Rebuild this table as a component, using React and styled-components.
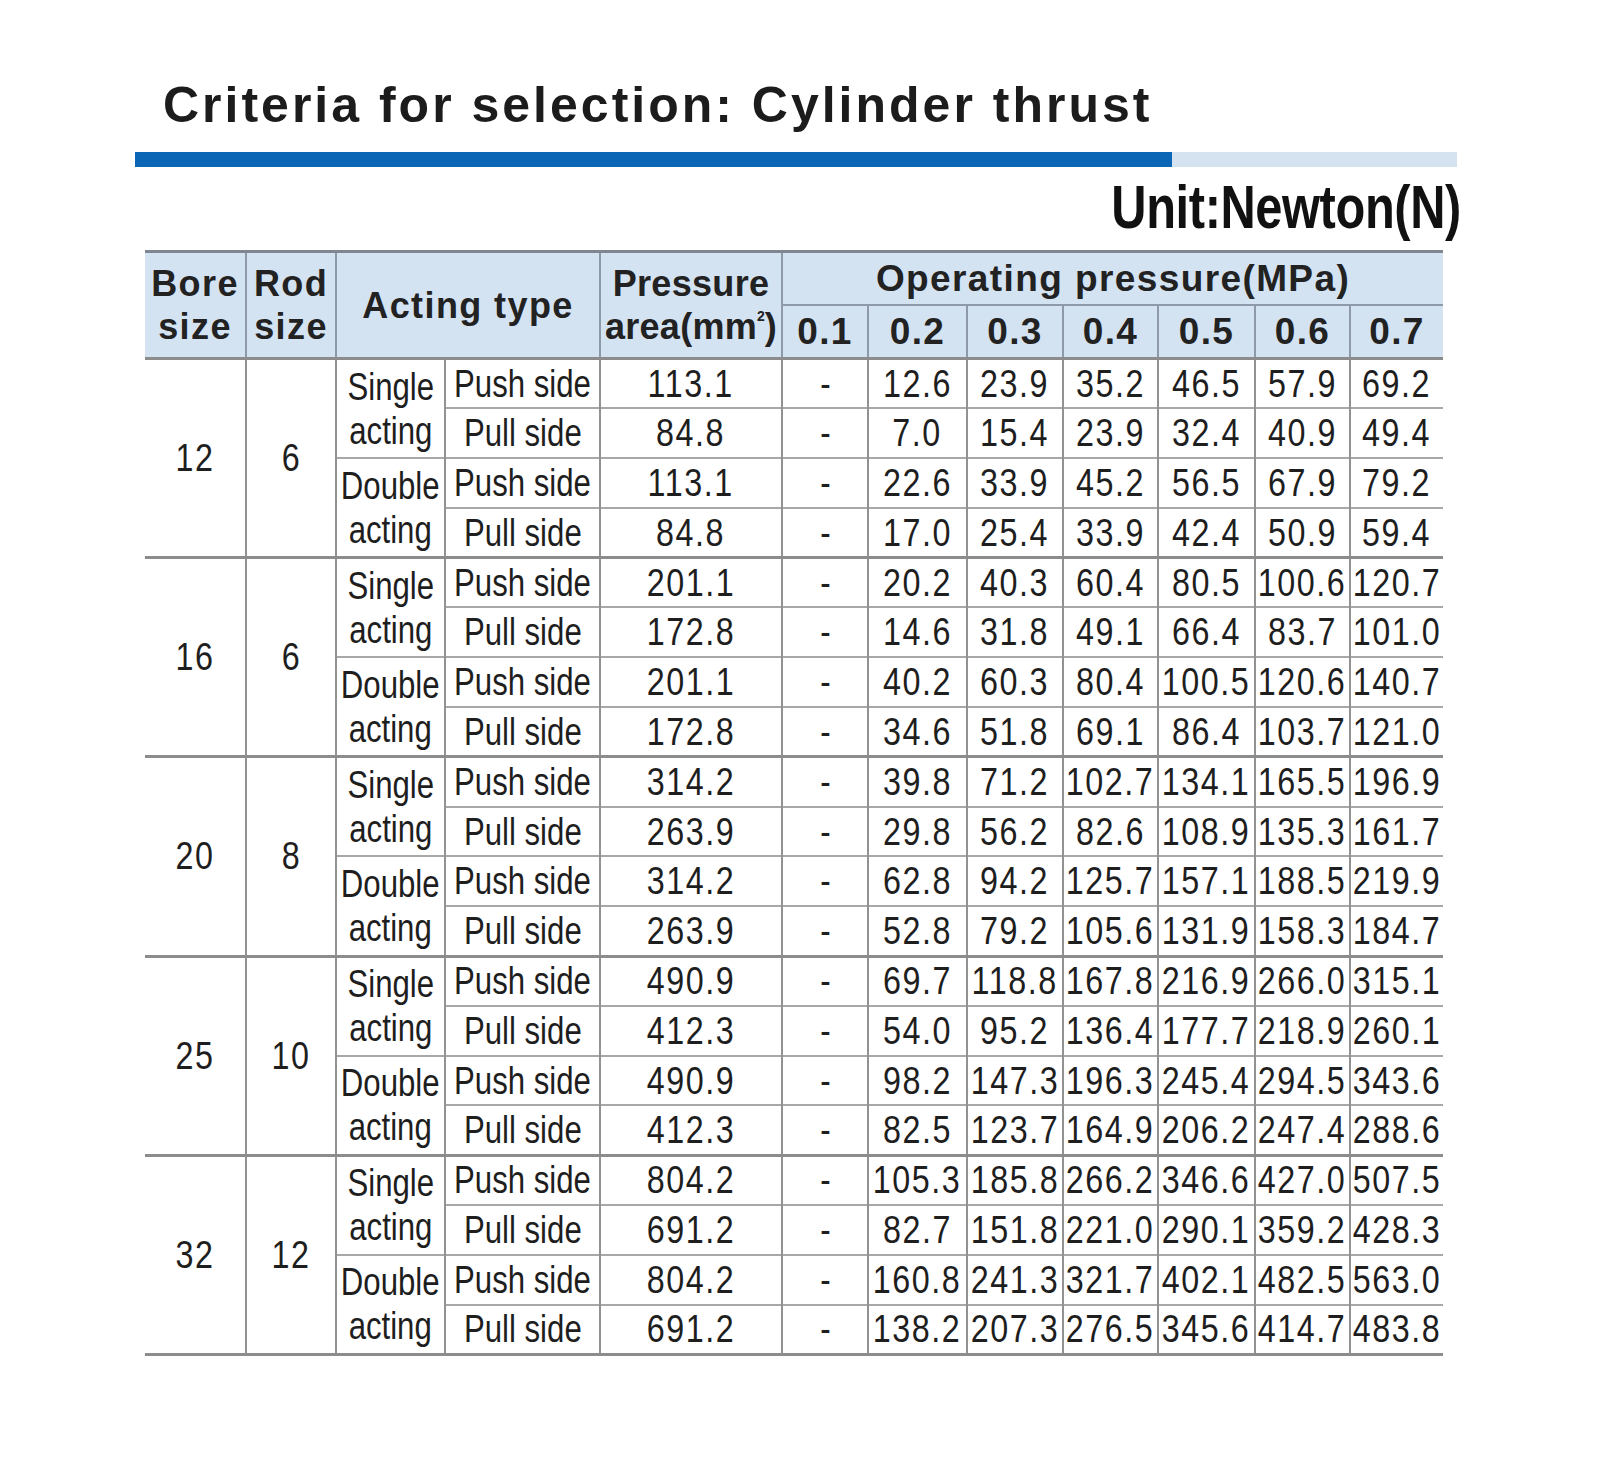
import React from "react";
import styled, { createGlobalStyle } from "styled-components";

const Global = createGlobalStyle`
  html, body { margin: 0; padding: 0; background: #ffffff; }
  body { font-family: "Liberation Sans", Arial, sans-serif; color: #1e1e1e; }
`;

const Page = styled.div`
  padding: 80px 0 60px 135px;
  width: 1340px;
`;

const Title = styled.h1`
  margin: 0 0 0 28px;
  font: bold 50px/50px "Liberation Sans", Arial, sans-serif;
  letter-spacing: 3px;
  color: #1c1c1c;
`;

const Bar = styled.div`
  display: flex;
  width: 1322px;
  height: 15px;
  margin-top: 22px;
`;

const BarSegment = styled.div`
  flex: ${(p) => p.$grow};
  background: ${(p) => (p.$light ? "#d5e3f1" : "#0b66b6")};
`;

const Unit = styled.div`
  width: 1326px;
  margin-top: 10px;
  text-align: right;
  font: bold 61px/60px "Liberation Sans", Arial, sans-serif;
  letter-spacing: -0.5px;
  color: #111;
`;

/* condensed rendering of the narrow typeface used in the source sheet */
const Narrow = styled.span`
  display: inline-block;
  transform: scaleX(${(p) => p.$sx || 0.82});
  transform-origin: ${(p) => p.$origin || "center"} center;
  margin: 0 ${(p) => (p.$origin ? "0" : "-30px")};
`;

const Table = styled.table`
  margin: 13px 0 0 10px;
  width: 1298px;
  table-layout: fixed;
  border-collapse: collapse;
  border-top: 3px solid #7d8691;
  border-bottom: 3px solid #8d8d8d;
`;

const HeadRow = styled.tr`
  height: ${(p) => p.$h}px;
`;

const Th = styled.th`
  background: #d4e3f2;
  padding: 0;
  font: bold ${(p) => p.$size || 36}px/43px "Liberation Sans", Arial, sans-serif;
  letter-spacing: ${(p) => (p.$tight ? "0.3px" : "1.4px")};
  color: #222;
  text-align: center;
  vertical-align: middle;
  white-space: nowrap;
  border-left: ${(p) => (p.$first ? "none" : "2px solid #8e9aa8")};
  border-bottom: 2px solid #8e9aa8;
`;

const Sup = styled.sup`
  font-size: 14px;
  line-height: 0;
  vertical-align: 18px;
  letter-spacing: 0;
`;

const Row = styled.tr`
  height: 49.8px;
`;

const Td = styled.td`
  padding: 0;
  font: 38px/44px "Liberation Sans", Arial, sans-serif;
  letter-spacing: ${(p) => (p.$num ? "1.8px" : "0")};
  color: #1e1e1e;
  text-align: center;
  vertical-align: middle;
  white-space: nowrap;
  overflow: visible;
  border-left: ${(p) => (p.$first ? "none" : "2px solid #929292")};
  border-top: ${(p) => (p.$group ? "3px solid #8c8c8c" : "2px solid #a8a8a8")};
`;

const widths = [101, 90, 109, 155, 182, 86, 99, 96, 95, 97, 95, 93];
const pressures = ["0.1", "0.2", "0.3", "0.4", "0.5", "0.6", "0.7"];
const NUM_SX = 0.85;

const groups = [
  {
    bore: "12",
    rod: "6",
    rows: [
      ["113.1", "12.6", "23.9", "35.2", "46.5", "57.9", "69.2"],
      ["84.8", "7.0", "15.4", "23.9", "32.4", "40.9", "49.4"],
      ["113.1", "22.6", "33.9", "45.2", "56.5", "67.9", "79.2"],
      ["84.8", "17.0", "25.4", "33.9", "42.4", "50.9", "59.4"],
    ],
  },
  {
    bore: "16",
    rod: "6",
    rows: [
      ["201.1", "20.2", "40.3", "60.4", "80.5", "100.6", "120.7"],
      ["172.8", "14.6", "31.8", "49.1", "66.4", "83.7", "101.0"],
      ["201.1", "40.2", "60.3", "80.4", "100.5", "120.6", "140.7"],
      ["172.8", "34.6", "51.8", "69.1", "86.4", "103.7", "121.0"],
    ],
  },
  {
    bore: "20",
    rod: "8",
    rows: [
      ["314.2", "39.8", "71.2", "102.7", "134.1", "165.5", "196.9"],
      ["263.9", "29.8", "56.2", "82.6", "108.9", "135.3", "161.7"],
      ["314.2", "62.8", "94.2", "125.7", "157.1", "188.5", "219.9"],
      ["263.9", "52.8", "79.2", "105.6", "131.9", "158.3", "184.7"],
    ],
  },
  {
    bore: "25",
    rod: "10",
    rows: [
      ["490.9", "69.7", "118.8", "167.8", "216.9", "266.0", "315.1"],
      ["412.3", "54.0", "95.2", "136.4", "177.7", "218.9", "260.1"],
      ["490.9", "98.2", "147.3", "196.3", "245.4", "294.5", "343.6"],
      ["412.3", "82.5", "123.7", "164.9", "206.2", "247.4", "288.6"],
    ],
  },
  {
    bore: "32",
    rod: "12",
    rows: [
      ["804.2", "105.3", "185.8", "266.2", "346.6", "427.0", "507.5"],
      ["691.2", "82.7", "151.8", "221.0", "290.1", "359.2", "428.3"],
      ["804.2", "160.8", "241.3", "321.7", "402.1", "482.5", "563.0"],
      ["691.2", "138.2", "207.3", "276.5", "345.6", "414.7", "483.8"],
    ],
  },
];

function GroupRows({ group }) {
  return group.rows.map((vals, i) => {
    const first = i === 0;
    const pairStart = i % 2 === 0;
    const push = i % 2 === 0;
    const [area, ...forces] = vals;
    return (
      <Row key={i}>
        {first && (
          <>
            <Td $first $group rowSpan={4} $num>
              <Narrow $sx={NUM_SX}>{group.bore}</Narrow>
            </Td>
            <Td $group rowSpan={4} $num>
              <Narrow $sx={NUM_SX}>{group.rod}</Narrow>
            </Td>
          </>
        )}
        {pairStart && (
          <Td $group={first} rowSpan={2}>
            <Narrow>
              {i === 0 ? "Single" : "Double"}
              <br />
              acting
            </Narrow>
          </Td>
        )}
        <Td $group={first}>
          <Narrow>{push ? "Push side" : "Pull side"}</Narrow>
        </Td>
        <Td $group={first} $num>
          <Narrow $sx={NUM_SX}>{area}</Narrow>
        </Td>
        <Td $group={first}>
          <Narrow>-</Narrow>
        </Td>
        {forces.map((f, j) => (
          <Td key={j} $group={first} $num>
            <Narrow $sx={NUM_SX}>{f}</Narrow>
          </Td>
        ))}
      </Row>
    );
  });
}

export default function App() {
  return (
    <>
      <Global />
      <Page>
        <Title>Criteria for selection: Cylinder thrust</Title>
        <Bar>
          <BarSegment $grow={1037} />
          <BarSegment $grow={285} $light />
        </Bar>
        <Unit>
          <Narrow $sx={0.8} $origin="right">
            Unit:Newton(N)
          </Narrow>
        </Unit>
        <Table>
          <colgroup>
            {widths.map((w, i) => (
              <col key={i} style={{ width: w }} />
            ))}
          </colgroup>
          <thead>
            <HeadRow $h={53}>
              <Th $first rowSpan={2}>
                Bore
                <br />
                size
              </Th>
              <Th rowSpan={2}>
                Rod
                <br />
                size
              </Th>
              <Th colSpan={2} rowSpan={2}>
                Acting type
              </Th>
              <Th rowSpan={2} $tight>
                Pressure
                <br />
                area(mm<Sup>2</Sup>)
              </Th>
              <Th colSpan={7} $size={37}>
                Operating pressure(MPa)
              </Th>
            </HeadRow>
            <HeadRow $h={54}>
              {pressures.map((p) => (
                <Th key={p} $size={37}>
                  {p}
                </Th>
              ))}
            </HeadRow>
          </thead>
          <tbody>
            {groups.map((g) => (
              <GroupRows key={g.bore} group={g} />
            ))}
          </tbody>
        </Table>
      </Page>
    </>
  );
}
